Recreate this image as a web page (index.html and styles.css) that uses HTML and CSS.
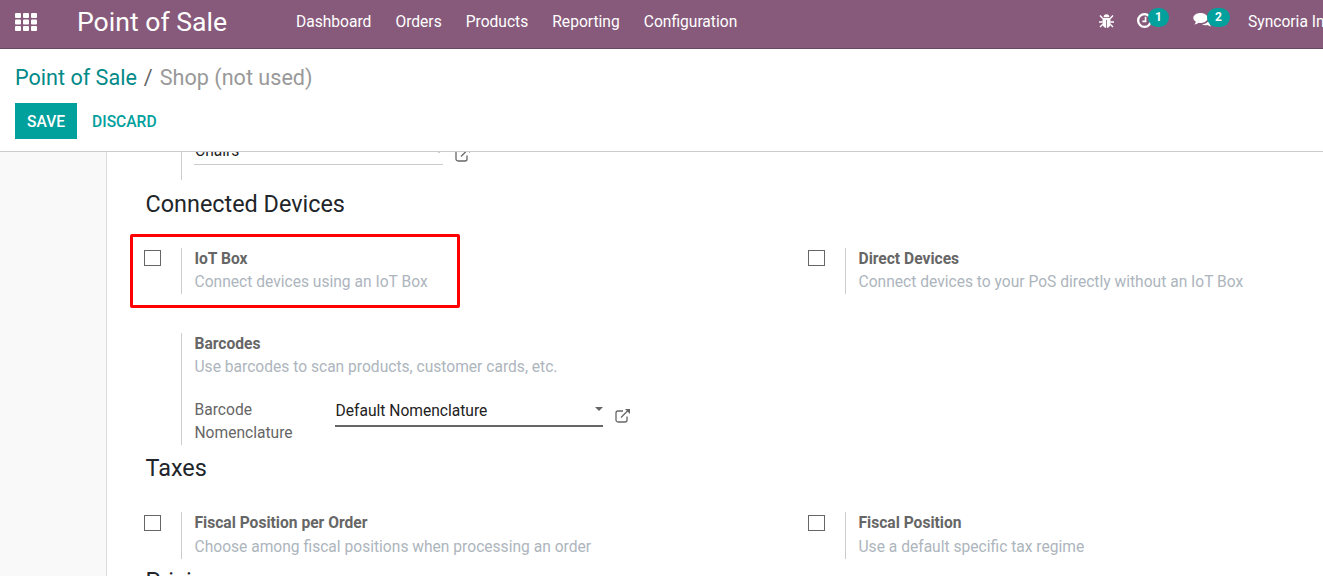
FILE: index.html
```html
<!DOCTYPE html>
<html lang="en">
<head>
    <meta charset="UTF-8">
    <title>Point of Sale - Odoo</title>
    <link rel="stylesheet" href="styles.css">
</head>
<body>

    <nav class="navbar">
        <a class="apps" href="#" aria-label="Apps">
            <svg width="22" height="18" viewBox="0 0 22 18" fill="#fff">
                <rect x="0" y="0" width="6" height="5" rx="1"/><rect x="8" y="0" width="6" height="5" rx="1"/><rect x="16" y="0" width="6" height="5" rx="1"/>
                <rect x="0" y="6.5" width="6" height="5" rx="1"/><rect x="8" y="6.5" width="6" height="5" rx="1"/><rect x="16" y="6.5" width="6" height="5" rx="1"/>
                <rect x="0" y="13" width="6" height="5" rx="1"/><rect x="8" y="13" width="6" height="5" rx="1"/><rect x="16" y="13" width="6" height="5" rx="1"/>
            </svg>
        </a>
        <span class="brand">Point of Sale</span>
        <ul class="menu">
            <li>Dashboard</li>
            <li>Orders</li>
            <li>Products</li>
            <li>Reporting</li>
            <li>Configuration</li>
        </ul>
        <div class="systray">
            <svg class="bug" width="15" height="14" viewBox="0 0 15 14" fill="#fff">
                <path d="M4.600 3.200a2.900 2.900 0 0 1 5.800 0z"/>
                <path d="M3.500 4h8v5.500c0 2.500-1.600 4.300-3.600 4.500V6H7.100v8c-2-.2-3.600-2-3.600-4.500z"/>
                <path d="M1 1.500l2.800 3M14 1.500l-2.800 3M0 8h3.600M15 8h-3.600M1 13l2.800-2.800M14 13l-2.800-2.800" stroke="#fff" stroke-width="1.400" fill="none"/>
            </svg>
            <span class="tray-item tray-clock">
                <svg width="17" height="17" viewBox="0 0 16 16" fill="none" stroke="#fff">
                    <circle cx="8" cy="8" r="6" stroke-width="2.200"/>
                    <path d="M9 4.500v4.300H6" stroke-width="1.500"/>
                </svg>
                <span class="badge badge-clock">1</span>
            </span>
            <span class="tray-item tray-chat">
                <svg width="19" height="16" viewBox="0 0 19 16" fill="#fff">
                    <path d="M7.500 1c4 0 7.200 2.200 7.200 5s-3.200 5-7.200 5c-.7 0-1.300-.1-2-.2C4.300 11.800 2.800 12.300 1.300 12.500c.8-.8 1.400-1.800 1.600-2.800C1.300 8.800.3 7.500.3 6c0-2.800 3.200-5 7.200-5z"/>
                    <path d="M16 5.500c1.700.8 2.800 2 2.800 3.500 0 1.300-.8 2.400-2 3.200.2.900.7 1.700 1.400 2.400-1.400-.2-2.500-.7-3.500-1.500-.6.100-1.100.2-1.700.2-1.500 0-2.900-.4-3.900-1.100 4.300 0 7.600-2.900 6.900-6.700z"/>
                </svg>
                <span class="badge badge-wide">2</span>
            </span>
            <span class="company">Syncoria Inc</span>
        </div>
    </nav>

    <header class="control-panel">
        <ol class="breadcrumb">
            <li class="crumb-link">Point of Sale</li>
            <li class="crumb-sep">/</li>
            <li class="crumb-active">Shop (not used)</li>
        </ol>
        <div class="buttons">
            <button class="btn-save">SAVE</button>
            <button class="btn-discard">DISCARD</button>
        </div>
    </header>

    <main class="content">
        <div class="sheet">
            <div class="row-cut">
                <div class="cut-box">
                    <div class="cut-field">
                        <div class="cut-input">
                            <span>Chairs</span>
                            <span class="caret caret-small"></span>
                        </div>
                        <svg class="ext-link small" width="16" height="15" viewBox="0 0 16 15" fill="none" stroke="#666" stroke-width="1.300">
                            <path d="M12 8.500v3.500a2 2 0 0 1-2 2H3a2 2 0 0 1-2-2V5a2 2 0 0 1 2-2h5"/>
                            <path d="M6 9.500L13.500 2"/><path d="M10 1h5v5z" fill="#666" stroke="none"/>
                        </svg>
                    </div>
                </div>
            </div>

            <h2 class="section-title">Connected Devices</h2>
            <div class="settings">
                <div class="setting">
                    <div class="setting-check"><span class="checkbox"></span></div>
                    <div class="setting-body">
                        <div class="setting-label">IoT Box</div>
                        <div class="setting-help">Connect devices using an IoT Box</div>
                    </div>
                </div>
                <div class="setting">
                    <div class="setting-check"><span class="checkbox"></span></div>
                    <div class="setting-body">
                        <div class="setting-label">Direct Devices</div>
                        <div class="setting-help">Connect devices to your PoS directly without an IoT Box</div>
                    </div>
                </div>
                <div class="setting setting-barcodes">
                    <div class="setting-check"></div>
                    <div class="setting-body">
                        <div class="setting-label">Barcodes</div>
                        <div class="setting-help">Use barcodes to scan products, customer cards, etc.</div>
                        <div class="field-row">
                            <div class="field-label">Barcode Nomenclature</div>
                            <div class="field-select">
                                <span>Default Nomenclature</span>
                                <span class="caret"></span>
                            </div>
                            <svg class="ext-link" width="16" height="15" viewBox="0 0 16 15" fill="none" stroke="#666" stroke-width="1.300">
                                <path d="M12 8.500v3.500a2 2 0 0 1-2 2H3a2 2 0 0 1-2-2V5a2 2 0 0 1 2-2h5"/>
                                <path d="M6 9.500L13.500 2"/><path d="M10 1h5v5z" fill="#666" stroke="none"/>
                            </svg>
                        </div>
                    </div>
                </div>
            </div>

            <h2 class="section-title title-taxes">Taxes</h2>
            <div class="settings settings-taxes">
                <div class="setting">
                    <div class="setting-check"><span class="checkbox"></span></div>
                    <div class="setting-body">
                        <div class="setting-label">Fiscal Position per Order</div>
                        <div class="setting-help">Choose among fiscal positions when processing an order</div>
                    </div>
                </div>
                <div class="setting">
                    <div class="setting-check"><span class="checkbox"></span></div>
                    <div class="setting-body">
                        <div class="setting-label">Fiscal Position</div>
                        <div class="setting-help">Use a default specific tax regime</div>
                    </div>
                </div>
            </div>

            <h2 class="section-title title-pricing">Pricing</h2>
        </div>
        <div class="highlight"></div>
    </main>

</body>
</html>
```

FILE: styles.css
```css
html, body {
    height: 100%;
}
body {
    font-family: Roboto, "Liberation Sans", sans-serif;
    font-size: 15.6px;
    margin: 0;
    padding: 0;
    background-color: #fff;
    color: #4c4c4c;
    overflow: hidden;
    display: flex;
    flex-direction: column;
}

/* top bar */
.navbar {
    height: 49px;
    box-sizing: border-box;
    flex: none;
    display: flex;
    align-items: center;
    background-color: #875a7b;
    border-bottom: 1px solid #6b4862;
    color: #fff;
    white-space: nowrap;
    overflow: hidden;
}
.apps {
    display: flex;
    margin-left: 15px;
    margin-bottom: 4px;
}
.brand {
    font-size: 26.6px;
    margin-left: 40px;
    width: 219px;
    position: relative;
    top: -3px;
}
.menu {
    display: flex;
    gap: 24px;
    list-style: none;
    margin: 0;
    padding: 0;
    position: relative;
    top: -2px;
}
.systray {
    margin-left: auto;
    display: flex;
    align-items: center;
    position: relative;
    top: -2px;
    width: 225px;
    flex: none;
}
.systray svg, .badge, .company {
    flex: none;
}
.bug {
    margin-left: 1px;
    margin-top: -2px;
}
.tray-item {
    display: flex;
    align-items: center;
    flex: none;
}
.tray-item svg {
    margin-top: -4px;
}
.tray-clock {
    margin-left: 22px;
}
.tray-chat {
    margin-left: 24px;
}
.badge {
    background-color: #00a09d;
    color: #fff;
    font-size: 12px;
    font-weight: 700;
    line-height: 19px;
    min-width: 21px;
    height: 19px;
    text-align: center;
    border-radius: 10px;
    margin-left: -4px;
    margin-top: -10px;
}
.badge-clock {
    margin-left: -5px;
}
.badge-wide {
    min-width: 23px;
    margin-left: -5px;
}
.company {
    margin-left: 18px;
}

/* breadcrumb and buttons */
.control-panel {
    height: 103px;
    flex: none;
    box-sizing: border-box;
    border-bottom: 1px solid #ccc;
    padding: 15px 15px 0;
}
.breadcrumb {
    display: flex;
    list-style: none;
    margin: 0;
    padding: 0;
    font-size: 21.6px;
    line-height: 28px;
}
.crumb-link {
    color: #018a88;
}
.crumb-sep {
    color: #666;
    margin: 0 7px;
}
.crumb-active {
    color: #999;
}
.buttons {
    display: flex;
    margin-top: 11px;
}
button {
    font-family: inherit;
    font-size: 15.6px;
    font-weight: 500;
    height: 36px;
    border: none;
    cursor: pointer;
    padding: 1px 12px 0;
}
.btn-save {
    background-color: #00a09d;
    color: #fff;
}
.btn-discard {
    background: none;
    color: #00a09d;
    margin-left: 3px;
}

/* form sheet */
.content {
    flex: 1;
    min-height: 0;
    background-color: #f9f9f9;
    padding-left: 106px;
    overflow: hidden;
    position: relative;
}
.sheet {
    background-color: #fff;
    border-left: 1px solid #dcdcdc;
    height: 100%;
}
.row-cut {
    height: 28px;
    padding-left: 74px;
}
.cut-box {
    border-left: 1px solid #ccc;
    height: 28px;
    padding-left: 12px;
    overflow: hidden;
}
.cut-field {
    display: flex;
    align-items: flex-start;
    width: 280px;
    margin-top: -11px;
}
.cut-input {
    width: 249px;
    height: 24px;
    line-height: 20px;
    box-sizing: border-box;
    border-bottom: 1px solid #ccc;
    color: #222;
    flex: none;
    padding-left: 1px;
    display: flex;
    justify-content: space-between;
}
.ext-link {
    flex: none;
}
.ext-link.small {
    margin: 6px 0 0 12px;
}
.section-title {
    font-size: 23.4px;
    font-weight: 400;
    line-height: 32px;
    color: #212529;
    margin: 8px 0 0 38.5px;
}
.settings {
    display: grid;
    grid-template-columns: 664px 1fr;
    margin: 27.5px 0 0 23px;
}
.setting {
    display: flex;
    align-items: stretch;
    min-height: 46px;
}
.setting-check {
    width: 51px;
    flex: none;
    box-sizing: border-box;
    padding-left: 14px;
}
.checkbox {
    display: block;
    width: 17px;
    height: 16px;
    box-sizing: border-box;
    border: 1px solid #666;
    background-color: #fff;
    margin-top: 2.5px;
}
.setting-body {
    border-left: 1px solid #ccc;
    padding-left: 12.5px;
    flex: 1;
}
.setting-label {
    font-weight: 700;
    color: #666;
    line-height: 23.4px;
}
.setting-help {
    color: #adb5bd;
    line-height: 23.4px;
}
.setting-barcodes {
    grid-column: 1 / 3;
    margin-top: 38.5px;
}
.field-row {
    display: flex;
    align-items: flex-start;
    margin-top: 19px;
    color: #666;
}
.field-label {
    width: 140px;
    flex: none;
    line-height: 23.4px;
}
.field-select {
    width: 268px;
    height: 28px;
    box-sizing: border-box;
    border-bottom: 2px solid #666;
    color: #222;
    padding-left: 1px;
    line-height: 24px;
    display: flex;
    justify-content: space-between;
}
.caret {
    border-top: 4px solid #666;
    border-left: 4px solid transparent;
    border-right: 4px solid transparent;
    margin: 8px 0 0;
    height: 0;
}
.caret-small {
    margin: 8px 0 0;
    border-top-color: #999;
}
.field-row .ext-link {
    margin: 9px 0 0 12px;
}
.title-taxes {
    margin-top: 7px;
}
.settings-taxes {
    margin-top: 28px;
}
.title-pricing {
    margin-top: 6px;
}

/* annotation drawn on the screenshot */
.highlight {
    position: absolute;
    left: 130px;
    top: 81.5px;
    width: 330px;
    height: 74.5px;
    box-sizing: border-box;
    border: 3px solid #f00;
    border-radius: 2px;
}
```
